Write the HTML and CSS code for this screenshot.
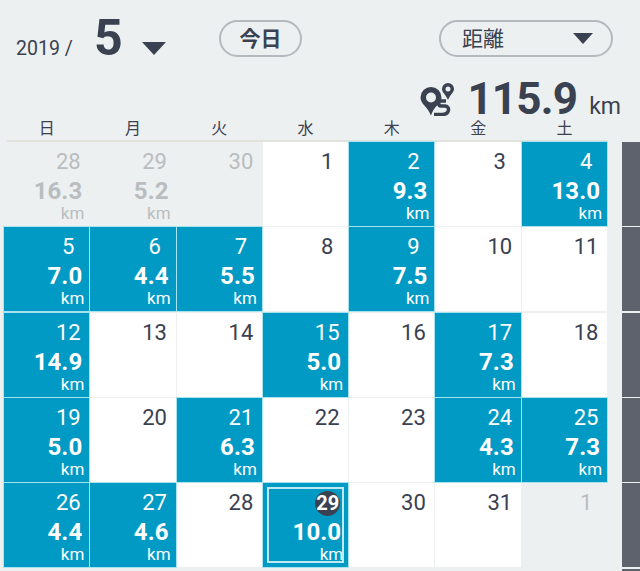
FILE: index.html
```html
<!DOCTYPE html>
<html lang="ja">
<head>
    <meta charset="UTF-8">
    <meta name="viewport" content="width=device-width, initial-scale=1.0">
    <title>Calendar</title>
    <link rel="stylesheet" href="styles.css">
</head>
<body>

    <header class="top-bar">
        <div class="month-pick">
            <span class="year">2019 /</span>
            <span class="month">5</span>
            <span class="arrow arrow-big"></span>
        </div>
        <button class="today-btn">今日</button>
        <div class="type-select">
            <span class="type-label">距離</span>
            <span class="arrow arrow-small"></span>
        </div>
    </header>

    <div class="total-row">
        <svg class="route-icon" width="34" height="33" viewBox="0 0 34 33">
            <path fill="#3a4150" fill-rule="evenodd" d="M11 4a10.500 10.500 0 0 0-10.500 10.500c0 6.500 7 9 10.500 18 1-3 2-5 3.500-7 3-4 7-6.500 7-11a10.500 10.500 0 0 0-10.500-10.500zm0 5.500a5 5 0 1 1 0 10 5 5 0 0 1 0-10z"/>
            <path fill="#3a4150" fill-rule="evenodd" d="M28 0a6 6 0 0 0-6 6c0 3.500 3.500 5 6 11 2.500-6 6-7.500 6-11a6 6 0 0 0-6-6zm0 3.500a2.500 2.500 0 1 1 0 5 2.500 2.500 0 0 1 0-5z"/>
            <path fill="none" stroke="#3a4150" stroke-width="3.500" d="M26 18h-5c-3 0-3 5 0 5h4c5 0 5 8-2 8.500H14"/>
        </svg>
        <span class="total-num">115.9</span>
        <span class="total-unit">km</span>
    </div>

    <div class="main">
        <div class="cal">
            <div class="week-head">
                <span>日</span><span>月</span><span>火</span><span>水</span><span>木</span><span>金</span><span>土</span>
            </div>
            <div class="days">
                <div class="day other"><span class="num">28</span><span class="dist">16.3</span><span class="unit">km</span></div>
                <div class="day other"><span class="num">29</span><span class="dist">5.2</span><span class="unit">km</span></div>
                <div class="day other"><span class="num">30</span></div>
                <div class="day"><span class="num">1</span></div>
                <div class="day run"><span class="num">2</span><span class="dist">9.3</span><span class="unit">km</span></div>
                <div class="day"><span class="num">3</span></div>
                <div class="day run"><span class="num">4</span><span class="dist">13.0</span><span class="unit">km</span></div>

                <div class="day run"><span class="num">5</span><span class="dist">7.0</span><span class="unit">km</span></div>
                <div class="day run"><span class="num">6</span><span class="dist">4.4</span><span class="unit">km</span></div>
                <div class="day run"><span class="num">7</span><span class="dist">5.5</span><span class="unit">km</span></div>
                <div class="day"><span class="num">8</span></div>
                <div class="day run"><span class="num">9</span><span class="dist">7.5</span><span class="unit">km</span></div>
                <div class="day"><span class="num">10</span></div>
                <div class="day"><span class="num">11</span></div>

                <div class="day run"><span class="num">12</span><span class="dist">14.9</span><span class="unit">km</span></div>
                <div class="day"><span class="num">13</span></div>
                <div class="day"><span class="num">14</span></div>
                <div class="day run"><span class="num">15</span><span class="dist">5.0</span><span class="unit">km</span></div>
                <div class="day"><span class="num">16</span></div>
                <div class="day run"><span class="num">17</span><span class="dist">7.3</span><span class="unit">km</span></div>
                <div class="day"><span class="num">18</span></div>

                <div class="day run"><span class="num">19</span><span class="dist">5.0</span><span class="unit">km</span></div>
                <div class="day"><span class="num">20</span></div>
                <div class="day run"><span class="num">21</span><span class="dist">6.3</span><span class="unit">km</span></div>
                <div class="day"><span class="num">22</span></div>
                <div class="day"><span class="num">23</span></div>
                <div class="day run"><span class="num">24</span><span class="dist">4.3</span><span class="unit">km</span></div>
                <div class="day run"><span class="num">25</span><span class="dist">7.3</span><span class="unit">km</span></div>

                <div class="day run"><span class="num">26</span><span class="dist">4.4</span><span class="unit">km</span></div>
                <div class="day run"><span class="num">27</span><span class="dist">4.6</span><span class="unit">km</span></div>
                <div class="day"><span class="num">28</span></div>
                <div class="day run today"><span class="num">29</span><span class="dist">10.0</span><span class="unit">km</span></div>
                <div class="day"><span class="num">30</span></div>
                <div class="day"><span class="num">31</span></div>
                <div class="day other"><span class="num">1</span></div>
            </div>
        </div>
        <div class="side">
            <div></div><div></div><div></div><div></div><div></div><div></div>
        </div>
    </div>

</body>
</html>
```

FILE: styles.css
```css
body {
    font-family: Roboto, "Noto Sans CJK JP", sans-serif;
    margin: 0;
    padding: 0;
    width: 640px;
    height: 571px;
    overflow: hidden;
    background-color: #edf0f1;
    color: #3a4150;
}

.top-bar {
    display: flex;
    align-items: flex-start;
    height: 76px;
}

.month-pick {
    display: flex;
    align-items: baseline;
    width: 219px;
    padding: 9px 0 0 16px;
    box-sizing: border-box;
}

.year {
    font-size: 19.5px;
    width: 78px;
}

.month {
    font-size: 50px;
    font-weight: 700;
    line-height: 58px;
    width: 48px;
}

.arrow {
    display: block;
    width: 0;
    height: 0;
    border-style: solid;
    border-color: #3a4150 transparent transparent transparent;
}

.arrow-big {
    border-width: 13px 12px 0 12px;
}

.arrow-small {
    border-width: 11px 10px 0 10px;
}

.today-btn {
    width: 83px;
    height: 37px;
    margin-top: 20px;
    padding: 0 0 3px 0;
    border: 2px solid #b4b9bd;
    border-radius: 19px;
    background-color: transparent;
    color: #3a4150;
    font-family: inherit;
    font-size: 21px;
    font-weight: 700;
}

.type-select {
    display: flex;
    justify-content: space-between;
    align-items: center;
    width: 174px;
    height: 37px;
    margin: 20px 0 0 137px;
    padding: 0 18px 0 21px;
    box-sizing: border-box;
    border: 2px solid #b4b9bd;
    border-radius: 19px;
    font-size: 21px;
}

.type-label {
    padding-bottom: 3px;
}

.total-row {
    display: flex;
    align-items: baseline;
    justify-content: flex-end;
    height: 40px;
    padding: 3px 19px 0 0;
    box-sizing: border-box;
}

.route-icon {
    align-self: flex-start;
    margin: 4px 13px 0 0;
}

.total-num {
    font-size: 44px;
    font-weight: 700;
    line-height: 40px;
    letter-spacing: -0.8px;
}

.total-unit {
    font-size: 23px;
    line-height: 40px;
    margin-left: 12px;
}

.main {
    display: flex;
    height: 455px;
}

.cal {
    width: 603px;
    margin-left: 4px;
}

.week-head {
    display: grid;
    grid-template-columns: repeat(7, 85.3px);
    column-gap: 1px;
    height: 26px;
    background: linear-gradient(#e2e2dc, #e2e2dc) no-repeat 3px 100% / calc(100% - 3px) 2px;
    font-size: 16px;
    line-height: 25px;
    text-align: center;
}

.days {
    display: grid;
    grid-template-columns: repeat(7, 85.3px);
    grid-auto-rows: 84px;
    gap: 1.33px 1px;
}

.day {
    display: flex;
    flex-direction: column;
    align-items: flex-end;
    padding: 8px 5px 0 0;
    box-sizing: border-box;
    background-color: #fff;
}

.num {
    width: 32px;
    margin-right: 0;
    font-size: 22px;
    line-height: 24px;
    text-align: center;
}

.dist {
    font-size: 24px;
    font-weight: 700;
    line-height: 28px;
    letter-spacing: 0.1px;
    margin-top: 3px;
    padding-right: 2px;
}

.unit {
    font-size: 17px;
    line-height: 17px;
}

.run {
    background-color: #009ac5;
    box-shadow: 0 0 0 1px #a9e3f0;
    color: #fff;
}

.other {
    background-color: transparent;
    color: #b9bdc0;
}

.today {
    outline: 2px solid #bdeaf5;
    outline-offset: -6px;
}

.today .num {
    width: 25px;
    height: 25px;
    margin-right: 3px;
    border-radius: 50%;
    background-color: #3a4150;
    font-size: 20px;
    font-weight: 700;
    line-height: 25px;
}

.today .dist {
    margin-top: 2px;
}

.side {
    display: grid;
    grid-template-rows: repeat(5, 84px) 1fr;
    gap: 1.33px;
    width: 18px;
    margin: 26px 0 0 15px;
}

.side div {
    background-color: #5e626d;
}
```
